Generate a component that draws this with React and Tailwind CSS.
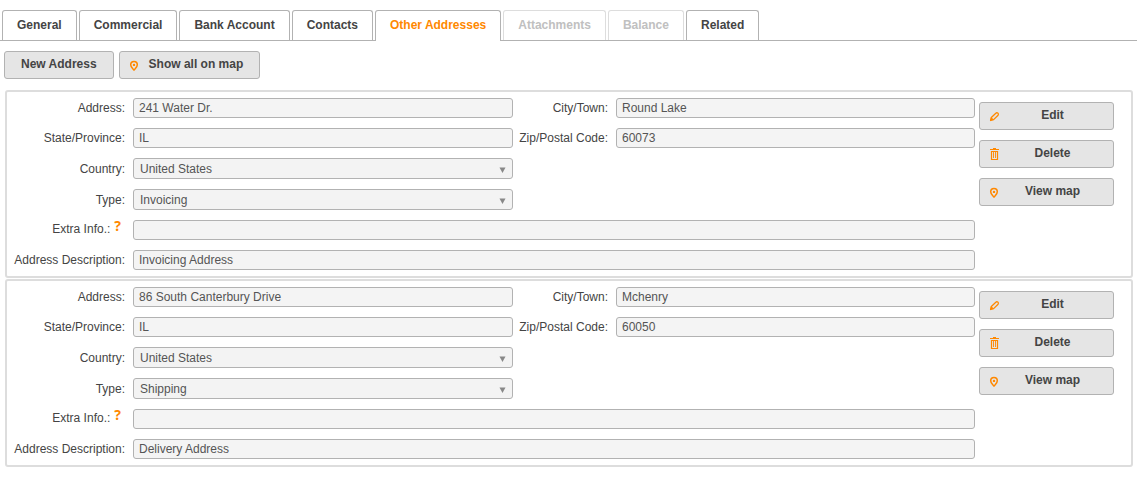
import React from "react";

const tabs = [
  { label: "General" },
  { label: "Commercial" },
  { label: "Bank Account" },
  { label: "Contacts" },
  { label: "Other Addresses", active: true },
  { label: "Attachments", disabled: true },
  { label: "Balance", disabled: true },
  { label: "Related" },
];

const addresses = [
  {
    id: "invoicing",
    address: "241 Water Dr.",
    city: "Round Lake",
    state: "IL",
    zip: "60073",
    country: "United States",
    type: "Invoicing",
    extra: "",
    description: "Invoicing Address",
  },
  {
    id: "shipping",
    address: "86 South Canterbury Drive",
    city: "Mchenry",
    state: "IL",
    zip: "60050",
    country: "United States",
    type: "Shipping",
    extra: "",
    description: "Delivery Address",
  },
];

function PinIcon() {
  return (
    <svg className="h-3 w-3 shrink-0" viewBox="0 0 12 12" fill="none" aria-hidden="true">
      <path
        d="M5 11.2C4 9.600 1.700 8.400 1.700 5.800a3.300 3.300 0 0 1 6.600 0C8.300 8.400 6 9.600 5 11.200Z"
        stroke="#ff8800"
        strokeWidth="1.500"
        strokeLinejoin="round"
      />
      <circle cx="5" cy="5.900" r="1.200" fill="#ff8800" />
    </svg>
  );
}

function PencilIcon() {
  return (
    <svg className="h-3 w-3 shrink-0" viewBox="0 0 12 12" fill="none" stroke="#ff8800" aria-hidden="true">
      <path
        d="M1.600 10.500L2.300 7.500L6.800 3.200Q7.800 2.300 8.800 3.100Q9.900 4.100 9.100 5.200L4.600 9.600Z"
        strokeWidth="1.300"
        strokeLinejoin="round"
      />
      <path d="M2.300 7.500L4.600 9.600L1.600 10.500Z" fill="#ff8800" strokeWidth="0.400" />
    </svg>
  );
}

function TrashIcon() {
  return (
    <svg className="h-3 w-3 shrink-0" viewBox="0 0 12 12" fill="none" stroke="#ff8800" aria-hidden="true">
      <path d="M1 1.500H10M4 0.500H7M2 3.500H9M2.500 3V12M8.500 3V12M2 11.500H9" strokeWidth="1.200" />
      <path d="M4.500 4V10M6.500 4V10" strokeWidth="0.900" />
    </svg>
  );
}

function Button({ icon, children, className = "" }) {
  return (
    <button
      type="button"
      className={`flex h-7 items-center rounded-[3px] border border-[#b2b2b2] bg-[#e5e5e5] font-bold text-[#444] ${className}`}
    >
      {icon}
      <span className="flex-1 pb-0.5 text-center">{children}</span>
    </button>
  );
}

function Label({ htmlFor, children }) {
  return (
    <label htmlFor={htmlFor} className="pr-2 text-right whitespace-nowrap text-[#444]">
      {children}
    </label>
  );
}

function Field({ id, value, className = "" }) {
  return (
    <input
      id={id}
      type="text"
      defaultValue={value}
      readOnly
      className={`h-5 w-full min-w-0 rounded-[3px] border border-[#b2b2b2] bg-[#f4f4f4] px-[5px] text-[#555] ${className}`}
    />
  );
}

function Select({ id, value }) {
  return (
    <div className="relative col-end-3">
      <select
        id={id}
        defaultValue={value}
        className="block h-[21px] w-full appearance-none rounded-[3px] border border-[#b2b2b2] bg-[#f3f3f3] px-1.5 text-[#555]"
      >
        <option>{value}</option>
      </select>
      <svg className="pointer-events-none absolute top-[9px] right-[7px] h-[6px] w-[7px]" viewBox="0 0 7 6" aria-hidden="true">
        <path d="M0.500 0.500H6.500L3.500 6Z" fill="#888" />
      </svg>
    </div>
  );
}

function AddressPanel({ item }) {
  const id = (name) => `${item.id}-${name}`;
  return (
    <section className="flex items-start gap-1 rounded-[3px] border-2 border-[#dddddd] py-1.5 pr-[17px]">
      <div className="grid flex-1 grid-cols-[126px_380fr_103px_359fr] items-center gap-y-2.5">
        <Label htmlFor={id("address")}>Address:</Label>
        <Field id={id("address")} value={item.address} />
        <Label htmlFor={id("city")}>City/Town:</Label>
        <Field id={id("city")} value={item.city} />

        <Label htmlFor={id("state")}>State/Province:</Label>
        <Field id={id("state")} value={item.state} />
        <Label htmlFor={id("zip")}>Zip/Postal Code:</Label>
        <Field id={id("zip")} value={item.zip} />

        <Label htmlFor={id("country")}>Country:</Label>
        <Select id={id("country")} value={item.country} />

        <div className="col-start-1 grid">
          <Label htmlFor={id("type")}>Type:</Label>
        </div>
        <Select id={id("type")} value={item.type} />

        <div className="col-start-1 flex h-5 items-start justify-end gap-1 pr-3">
          <label htmlFor={id("extra")} className="pt-px text-[#444]">
            Extra Info.:
          </label>
          <span className="font-['Noto_Sans',sans-serif] text-[14px] leading-3 font-bold text-[#ff8800]">?</span>
        </div>
        <Field id={id("extra")} value={item.extra} className="col-span-3" />

        <Label htmlFor={id("description")}>Address Description:</Label>
        <Field id={id("description")} value={item.description} className="col-span-3" />
      </div>
      <div className="flex w-[135px] flex-col gap-2.5 pt-1">
        <Button icon={<PencilIcon />} className="px-[9px]">Edit</Button>
        <Button icon={<TrashIcon />} className="px-[9px]">Delete</Button>
        <Button icon={<PinIcon />} className="px-[9px]">View map</Button>
      </div>
    </section>
  );
}

export default function App() {
  return (
    <main className="bg-white pt-2.5 font-['Liberation_Sans',Arial,sans-serif] text-[12px] leading-4">
      <nav className="flex gap-0.5 border-b border-[#b2b2b2] pl-0.5" aria-label="Sections">
        {tabs.map((tab) => (
          <button
            key={tab.label}
            type="button"
            disabled={tab.disabled}
            className={`rounded-t-[3px] border border-b-0 bg-white px-[14px] pb-0.5 font-bold whitespace-nowrap ${
              tab.active
                ? "-mb-px h-[31px] border-[#b2b2b2] text-[#ff8800]"
                : tab.disabled
                  ? "h-[30px] border-[#dddddd] text-[#c0c0c0]"
                  : "h-[30px] border-[#b2b2b2] text-[#444]"
            }`}
          >
            {tab.label}
          </button>
        ))}
      </nav>
      <div className="flex gap-[5px] px-1 pt-2.5">
        <Button className="px-4">New Address</Button>
        <Button icon={<PinIcon />} className="gap-2 pr-4 pl-[9px]">Show all on map</Button>
      </div>
      <div className="flex flex-col gap-px pt-[11px] pr-1 pl-[5px]">
        {addresses.map((item) => (
          <AddressPanel key={item.id} item={item} />
        ))}
      </div>
    </main>
  );
}
